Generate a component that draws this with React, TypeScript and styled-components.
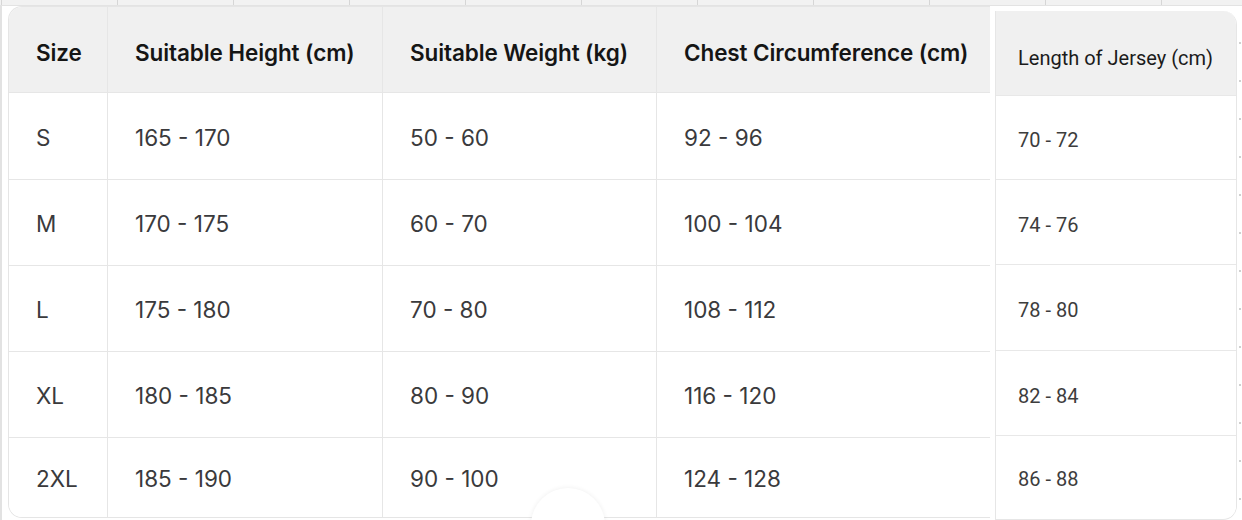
import React from "react";
import styled, { createGlobalStyle } from "styled-components";

const GlobalStyle = createGlobalStyle`
  html, body {
    margin: 0;
    padding: 0;
    background: #ffffff;
    overflow: hidden;
  }
  * { box-sizing: border-box; }
`;

const Page = styled.div`
  position: relative;
  width: 1242px;
  height: 520px;
  overflow: hidden;
  background: #ffffff;
  display: flex;
  flex-direction: column;
`;

const TopStrip = styled.div`
  height: 6px;
  flex: none;
  background-color: #f2f2f2;
  border-bottom: 1px solid #e3e3e3;
  background-image: linear-gradient(to right, #d6d6d6 1px, transparent 1px);
  background-size: 116px 100%;
  background-position: 117px 0;
`;

const Content = styled.div`
  flex: 1;
  display: grid;
  grid-template-columns: 8px 982px 5px 242px 5px;
  align-items: start;
`;

const LeftRail = styled.div`
  height: 100%;
  border-left: 2px solid #e2e2e2;
  background: #ffffff;
`;

const Gap = styled.div`
  height: 100%;
`;

const MainTable = styled.div`
  display: flex;
  flex-direction: column;
  border: 1px solid #e5e5e5;
  border-right: none;
  border-radius: 14px 0 0 14px;
  overflow: hidden;
  background: #ffffff;
  font-family: Inter, "Noto Sans", sans-serif;
`;

const MainRow = styled.div<{ $h: number; $head?: boolean; $last?: boolean }>`
  display: grid;
  grid-template-columns: 99px 275px 274px 1fr;
  height: ${(p) => p.$h}px;
  background: ${(p) => (p.$head ? "#f0f0f0" : "#ffffff")};
  border-bottom: ${(p) => (p.$last ? "none" : "1px solid #e6e6e6")};
`;

const MainCell = styled.div<{ $head?: boolean; $end?: boolean }>`
  display: flex;
  align-items: center;
  padding: ${(p) => (p.$head ? "5px 0 0 27px" : "2px 0 0 27px")};
  border-right: ${(p) => (p.$end ? "none" : "1px solid #e6e6e6")};
  font-size: 22.5px;
  font-weight: ${(p) => (p.$head ? 600 : 400)};
  color: ${(p) => (p.$head ? "#151515" : "#3a3a3c")};
  letter-spacing: ${(p) => (p.$head ? "-0.1px" : "0")};
  white-space: nowrap;
`;

const SideColumn = styled.div`
  margin-top: 5px;
  height: 509px;
  display: flex;
  flex-direction: column;
  border: 1px solid #e6e6e6;
  border-top: none;
  border-radius: 0 14px 14px 0;
  overflow: hidden;
  background: #ffffff;
  font-family: Roboto, "Liberation Sans", sans-serif;
`;

const SideCell = styled.div<{ $h: number; $head?: boolean; $last?: boolean }>`
  flex: none;
  height: ${(p) => p.$h}px;
  display: flex;
  align-items: center;
  padding: ${(p) => (p.$head ? "9px 0 0 22px" : "5px 0 0 22px")};
  background: ${(p) => (p.$head ? "#f0f0f0" : "#ffffff")};
  border-bottom: ${(p) => (p.$last ? "none" : "1px solid #e8e8e8")};
  font-size: 20px;
  letter-spacing: 0;
  color: ${(p) => (p.$head ? "#1b1b1b" : "#3d3d3d")};
  white-space: nowrap;
`;

const RightRail = styled.div`
  height: 100%;
  background-image: linear-gradient(
    to bottom,
    transparent 0px,
    transparent 36px,
    #d0d0d0 36px,
    #d0d0d0 38px
  );
  background-size: 2px 38px;
  background-repeat: repeat-y;
  background-position: 2px 0px;
`;

const FloatingRing = styled.div`
  position: absolute;
  left: 531px;
  top: 488px;
  width: 74px;
  height: 74px;
  border-radius: 50%;
  background: #ffffff;
  box-shadow: 0 0 5px rgba(0, 0, 0, 0.07);
`;

const headers = [
  "Size",
  "Suitable Height (cm)",
  "Suitable Weight (kg)",
  "Chest Circumference (cm)",
];

const rows = [
  ["S", "165 - 170", "50 - 60", "92 - 96"],
  ["M", "170 - 175", "60 - 70", "100 - 104"],
  ["L", "175 - 180", "70 - 80", "108 - 112"],
  ["XL", "180 - 185", "80 - 90", "116 - 120"],
  ["2XL", "185 - 190", "90 - 100", "124 - 128"],
];

const lengths = ["70 - 72", "74 - 76", "78 - 80", "82 - 84", "86 - 88"];
const rowHeights = [87, 86, 86, 86, 79];
const sideHeights = [84, 85, 86, 85, 81];

export default function App() {
  return (
    <Page>
      <GlobalStyle />
      <TopStrip />
      <Content>
        <LeftRail />
        <MainTable>
          <MainRow $h={86} $head>
            {headers.map((h, i) => (
              <MainCell key={h} $head $end={i === headers.length - 1}>
                {h}
              </MainCell>
            ))}
          </MainRow>
          {rows.map((r, ri) => (
            <MainRow key={r[0]} $h={rowHeights[ri]} $last={ri === rows.length - 1}>
              {r.map((c, ci) => (
                <MainCell key={ci} $end={ci === r.length - 1}>
                  {c}
                </MainCell>
              ))}
            </MainRow>
          ))}
        </MainTable>
        <Gap />
        <SideColumn>
          <SideCell $h={85} $head>
            Length of Jersey (cm)
          </SideCell>
          {lengths.map((l, i) => (
            <SideCell key={l} $h={sideHeights[i]} $last={i === lengths.length - 1}>
              {l}
            </SideCell>
          ))}
        </SideColumn>
        <RightRail />
      </Content>
      <FloatingRing />
    </Page>
  );
}
